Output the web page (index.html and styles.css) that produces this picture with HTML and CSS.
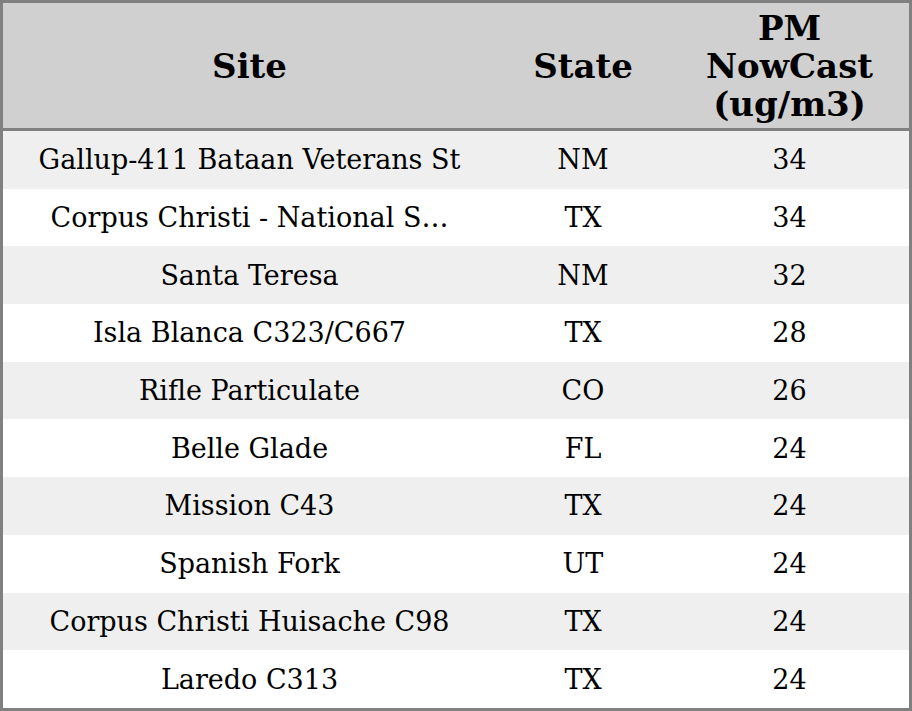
FILE: index.html
```html
<!DOCTYPE html>
<html lang="en">
<head>
<meta charset="utf-8">
<title>PM NowCast</title>
<link rel="stylesheet" href="styles.css">
</head>
<body>
<table class="data">
  <colgroup>
    <col class="c-site">
    <col class="c-state">
    <col class="c-pm">
  </colgroup>
  <thead>
    <tr class="head">
      <th>Site</th>
      <th>State</th>
      <th>PM<br>NowCast<br>(ug/m3)</th>
    </tr>
  </thead>
  <tbody>
    <tr class="odd"><td>Gallup-411 Bataan Veterans St</td><td>NM</td><td>34</td></tr>
    <tr><td>Corpus Christi - National S…</td><td>TX</td><td>34</td></tr>
    <tr class="odd"><td>Santa Teresa</td><td>NM</td><td>32</td></tr>
    <tr><td>Isla Blanca C323/C667</td><td>TX</td><td>28</td></tr>
    <tr class="odd"><td>Rifle Particulate</td><td>CO</td><td>26</td></tr>
    <tr><td>Belle Glade</td><td>FL</td><td>24</td></tr>
    <tr class="odd"><td>Mission C43</td><td>TX</td><td>24</td></tr>
    <tr><td>Spanish Fork</td><td>UT</td><td>24</td></tr>
    <tr class="odd"><td>Corpus Christi Huisache C98</td><td>TX</td><td>24</td></tr>
    <tr><td>Laredo C313</td><td>TX</td><td>24</td></tr>
  </tbody>
</table>
</body>
</html>
```

FILE: styles.css
```css
html, body {
  margin: 0;
  padding: 0;
  background: #ffffff;
}

.data {
  width: 912px;
  border: 3px solid #808080;
  border-collapse: separate;
  border-spacing: 0;
  table-layout: fixed;
  font-family: "DejaVu Serif", serif;
  color: #000000;
}

.c-site { width: 493px; }
.c-state { width: 174px; }
.c-pm { width: 239px; }

.head th {
  height: 125px;
  padding: 0;
  background: #d0d0d0;
  border-bottom: 3px solid #808080;
  font-size: 34px;
  font-weight: bold;
  line-height: 38px;
  text-align: center;
  vertical-align: middle;
}

tbody tr {
  height: 57.7px;
}

tbody td {
  padding: 0;
  font-size: 27px;
  line-height: normal;
  text-align: center;
  vertical-align: middle;
  white-space: nowrap;
  overflow: hidden;
}

tbody tr.odd td {
  background: #efefef;
}
```
